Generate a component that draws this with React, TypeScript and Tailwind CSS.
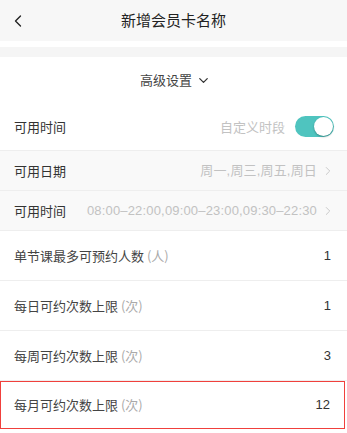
import { ChevronDown, ChevronLeft, ChevronRight } from "lucide-react";

const font = { fontFamily: '"Noto Sans CJK SC", "Liberation Sans", sans-serif' };

const Toggle = () => (
  <div className="relative h-[21px] w-[39px] rounded-full bg-[#4fc4bf]">
    <div className="absolute right-[1px] top-[1px] h-[19px] w-[19px] rounded-full bg-white shadow-[0_1px_2px_rgba(0,0,0,0.3)]" />
  </div>
);

const LinkRow = ({ label, value }: { label: string; value: string }) => (
  <div className="flex h-10 items-center justify-between border-b border-[#eeeeee] bg-[#f9f9f9] pl-[14px] pr-[12px]">
    <span className="shrink-0 text-[13px] text-[#333]">{label}</span>
    <div className="flex items-center gap-[4px] text-[13px] text-[#c2c2c2]">
      <span className="font-['Liberation_Sans',_'Noto_Sans_CJK_SC',_sans-serif] tracking-[0.17px]">{value}</span>
      <ChevronRight className="h-[14px] w-[14px]" strokeWidth={1.5} />
    </div>
  </div>
);

const LimitRow = ({ label, unit, value, highlight }: { label: string; unit: string; value: string; highlight?: boolean }) => (
  <div
    className={
      highlight
        ? "mr-[2px] flex h-[48px] items-center justify-between border-[1.5px] border-[#f0403c] pl-[13px] pr-[14px]"
        : "flex h-[50px] items-center justify-between border-b border-[#eeeeee] pl-[14px] pr-[16px]"
    }
  >
    <span className="text-[13px] text-[#444]">
      {label}
      <span className="text-[#aaa]"> ({unit})</span>
    </span>
    <span className="font-['Liberation_Sans',_sans-serif] text-[13px] text-[#333]">{value}</span>
  </div>
);

export default function App() {
  return (
    <div className="h-[433px] w-[347px] overflow-hidden bg-white" style={font}>
      <div className="relative flex h-[41px] items-center justify-center bg-[#f7f7f7]">
        <ChevronLeft className="absolute left-[8px] top-[11px] h-[20px] w-[20px] text-[#222]" strokeWidth={1.6} />
        <span className="text-[15px] text-[#222]">新增会员卡名称</span>
      </div>
      <div className="h-[6px]" />
      <div className="h-[10px] bg-[#f5f5f5]" />

      <div className="flex h-[46px] items-center justify-center gap-[4px] pl-[4px] text-[13px] text-[#444]">
        <span>高级设置</span>
        <ChevronDown className="h-[15px] w-[15px] text-[#333]" strokeWidth={2} />
      </div>

      <div className="flex h-[48px] items-center justify-between border-b border-[#eeeeee] pl-[14px] pr-[13px]">
        <span className="text-[13px] text-[#333]">可用时间</span>
        <div className="flex items-center gap-[10px]">
          <span className="text-[13px] text-[#c2c2c2]">自定义时段</span>
          <Toggle />
        </div>
      </div>

      <LinkRow label="可用日期" value="周一,周三,周五,周日" />
      <LinkRow label="可用时间" value="08:00–22:00,09:00–23:00,09:30–22:30" />

      <LimitRow label="单节课最多可预约人数" unit="人" value="1" />
      <LimitRow label="每日可约次数上限" unit="次" value="1" />
      <LimitRow label="每周可约次数上限" unit="次" value="3" />
      <LimitRow label="每月可约次数上限" unit="次" value="12" highlight />
    </div>
  );
}
